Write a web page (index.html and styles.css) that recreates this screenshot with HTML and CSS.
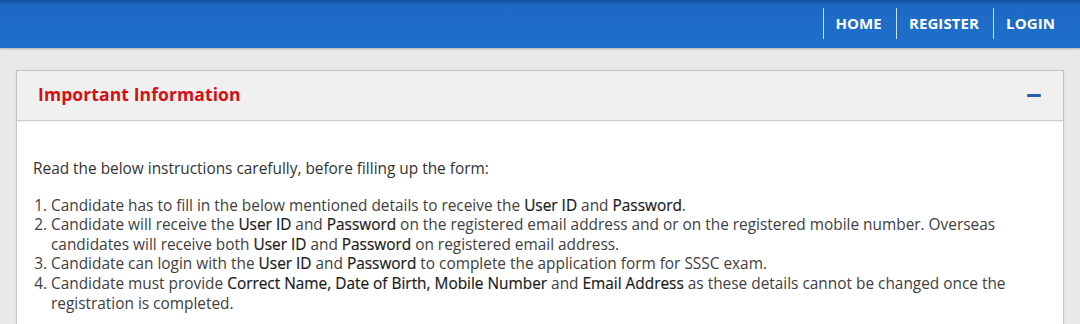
FILE: index.html
```html
<!DOCTYPE html>
<html>
<head>
<meta charset="utf-8">
<link rel="stylesheet" href="styles.css">
</head>
<body>
<header class="topbar">
  <nav class="nav">
    <a class="nav-item">HOME</a>
    <a class="nav-item">REGISTER</a>
    <a class="nav-item">LOGIN</a>
  </nav>
</header>
<main class="page">
  <section class="panel">
    <div class="panel-head">
      <h2 class="panel-title">Important Information</h2>
      <span class="collapse"></span>
    </div>
    <div class="panel-body">
      <p class="intro">Read the below instructions carefully, before filling up the form:</p>
      <ol class="rules">
        <li>Candidate has to fill in the below mentioned details to receive the <b>User ID</b> and <b>Password</b>.</li>
        <li>Candidate will receive the <b>User ID</b> and <b>Password</b> on the registered email address and or on the registered mobile number. Overseas candidates will receive both <b>User ID</b> and <b>Password</b> on registered email address.</li>
        <li>Candidate can login with the <b>User ID</b> and <b>Password</b> to complete the application form for SSSC exam.</li>
        <li>Candidate must provide <b>Correct Name, Date of Birth, Mobile Number</b> and <b>Email Address</b> as these details cannot be changed once the registration is completed.</li>
      </ol>
    </div>
  </section>
</main>
</body>
</html>
```

FILE: styles.css
```css
* { box-sizing: border-box; }
html, body { margin: 0; padding: 0; }
body {
  background: #e9e9e9;
  font-family: "Open Sans", "Noto Sans", sans-serif;
  color: #404040;
  width: 1080px;
  height: 324px;
  overflow: hidden;
}
.topbar {
  height: 48px;
  background: linear-gradient(#16539f 0, #1d6ac4 6px, #1e6fcb 100%);
  box-shadow: 0 1px 2px rgba(0,0,0,0.25);
  display: flex;
  justify-content: flex-end;
  align-items: center;
  padding-right: 11px;
  padding-bottom: 2px;
}
.nav { display: flex; height: 31px; align-items: stretch; }
.nav-item {
  display: flex;
  align-items: center;
  color: #fff;
  font-weight: 700;
  font-size: 15px;
  letter-spacing: 0.1px;
  padding: 0 14px 0 12px;
  border-left: 1px solid rgba(255,255,255,0.8);
}
.page { padding: 22px 16px 0 16px; }
.panel {
  border: 1px solid #c8c8c8;
  background: #fff;
  width: 1048px;
  box-shadow: 0 0 2px rgba(0,0,0,0.08);
}
.panel-head {
  height: 50px;
  background: #f0f0f0;
  border-bottom: 1px solid #cfcfcf;
  display: flex;
  align-items: center;
  justify-content: space-between;
  padding: 0 22px 3px 21px;
  box-shadow: 0 1px 2px rgba(0,0,0,0.08);
}
.panel-title {
  margin: 0;
  color: #d40f14;
  font-size: 17.5px;
  font-weight: 700;
  letter-spacing: 0.1px;
}
.collapse {
  width: 14px;
  height: 3px;
  background: #2d5fae;
  border-radius: 1px;
  margin-top: 2px;
}
.panel-body {
  padding: 38px 16px 20px 16px;
  font-size: 15.4px;
  line-height: 19.6px;
}
.intro { margin: 0 0 17px 0; color: #333; }
.rules { margin: 0; padding-left: 18px; }
.rules li { padding-left: 0; }
.rules b {
  font-weight: 400;
  color: #1a1a1a;
  -webkit-text-stroke: 0.2px #1a1a1a;
}
```
